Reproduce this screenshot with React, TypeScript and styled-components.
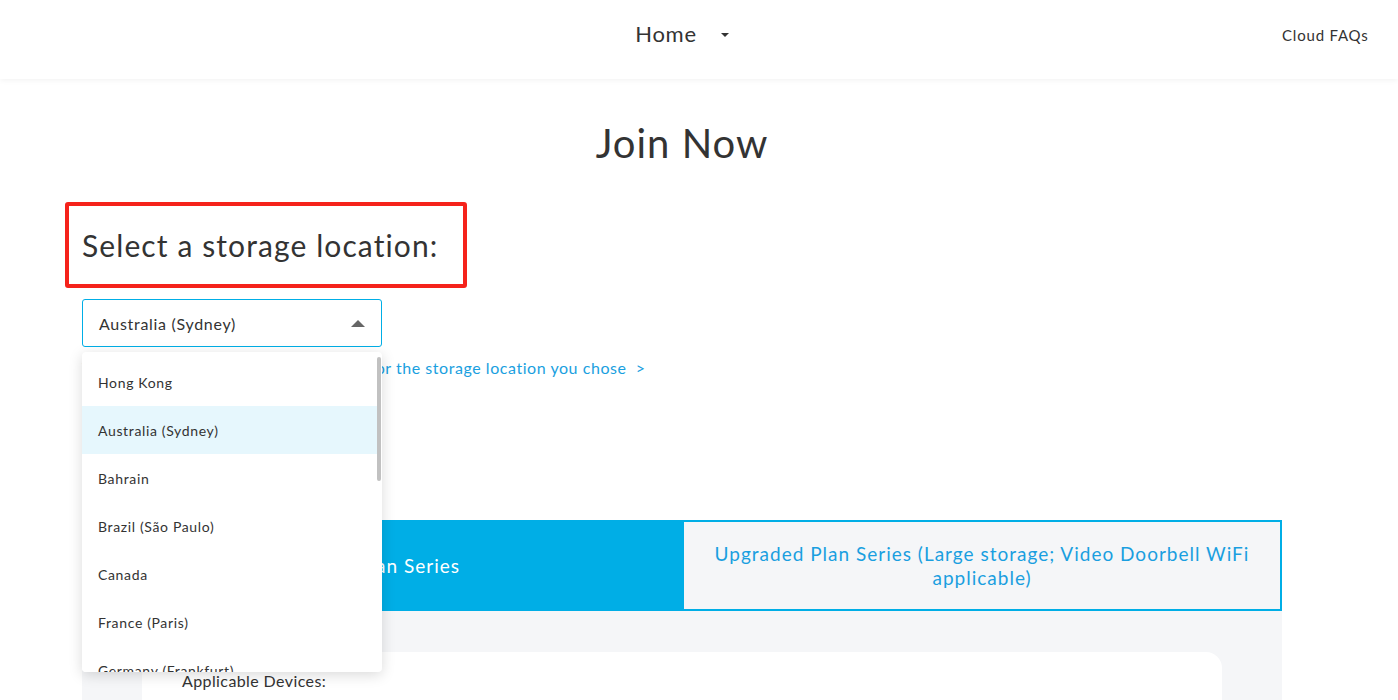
import React, { useState } from "react";
import styled, { createGlobalStyle } from "styled-components";

const GlobalStyle = createGlobalStyle`
  html, body {
    margin: 0;
    padding: 0;
    background: #fff;
    font-family: "Lato", "Noto Sans", sans-serif;
    color: #333;
  }
  * { box-sizing: border-box; }
`;

const blue = "#00aee6";

const Header = styled.header`
  height: 79px;
  background: #fff;
  box-shadow: 0 1px 6px rgba(0, 0, 0, 0.06);
  display: grid;
  grid-template-columns: 82px 1200px 1fr;
  align-items: start;
  padding: 20px 30px 0 0;
`;

const NavCenter = styled.div`
  grid-column: 2;
  justify-self: center;
  display: flex;
  align-items: center;
  gap: 24px;
  font-size: 22px;
  line-height: 28px;
  letter-spacing: 0.7px;
  color: #333;
`;

const Caret = styled.span`
  width: 0;
  height: 0;
  border-left: 4px solid transparent;
  border-right: 4px solid transparent;
  border-top: 4px solid #333;
  margin-top: 2px;
`;

const NavRight = styled.a`
  justify-self: end;
  margin-top: 5px;
  white-space: nowrap;
  font-size: 15px;
  line-height: 20px;
  letter-spacing: 0.8px;
  color: #333;
  text-decoration: none;
`;

const Main = styled.main`
  width: 1200px;
  margin-left: 82px;
`;

const Title = styled.h1`
  margin: 40px 0 0;
  text-align: center;
  font-weight: 400;
  font-size: 40px;
  line-height: 48px;
  letter-spacing: 1px;
  color: #333;
`;

const Highlight = styled.div`
  margin: 35px 0 0 -17px;
  border: 4px solid #f5221b;
  border-radius: 3px;
  padding: 0 0 0 13px;
  height: 86px;
  width: 402px;
  display: flex;
  align-items: center;
`;

const SectionTitle = styled.h2`
  margin: 0;
  font-weight: 400;
  font-size: 30px;
  letter-spacing: 1.1px;
  color: #333;
`;

const SelectWrap = styled.div`
  position: relative;
  width: 300px;
  margin-top: 11px;
`;

const SelectBox = styled.div`
  height: 48px;
  border: 1px solid ${blue};
  border-radius: 3px;
  display: flex;
  align-items: center;
  justify-content: space-between;
  padding: 0 16px;
  font-size: 16px;
  letter-spacing: 0.7px;
  color: #333;
`;

const UpArrow = styled.span`
  width: 0;
  height: 0;
  border-left: 7px solid transparent;
  border-right: 7px solid transparent;
  border-bottom: 7px solid #666;
`;

const Menu = styled.ul`
  position: absolute;
  top: 53px;
  left: 0;
  width: 300px;
  height: 320px;
  margin: 0;
  padding: 6px 0 0;
  list-style: none;
  background: #fff;
  border-radius: 4px;
  box-shadow: 0 3px 14px rgba(0, 0, 0, 0.15);
  overflow: hidden;
  z-index: 10;
`;

const Option = styled.li<{ $active?: boolean }>`
  height: 48px;
  display: flex;
  align-items: center;
  padding-left: 16px;
  font-size: 14px;
  letter-spacing: 0.65px;
  color: #333;
  background: ${(p) => (p.$active ? "#e6f7fd" : "#fff")};
  margin-right: 4px;
`;

const ScrollThumb = styled.span`
  position: absolute;
  right: 1px;
  top: 5px;
  width: 4px;
  height: 124px;
  border-radius: 2px;
  background: #c1c1c1;
`;

const PriceLink = styled.a`
  display: block;
  margin-top: 11px;
  font-size: 16px;
  line-height: 20px;
  letter-spacing: 0.55px;
  color: #1a9fe0;
  text-decoration: none;
`;

const Tabs = styled.div`
  margin-top: 142px;
  display: grid;
  grid-template-columns: 1fr 1fr;
  height: 91px;
`;

const Tab = styled.div<{ $active?: boolean }>`
  display: flex;
  align-items: center;
  justify-content: center;
  text-align: center;
  padding: 0 30px;
  font-size: 19px;
  line-height: 24px;
  letter-spacing: 1px;
  color: ${(p) => (p.$active ? "#fff" : "#1a9fe0")};
  background: ${(p) => (p.$active ? blue : "#f5f6f8")};
  border: 2px solid ${blue};
`;

const Panel = styled.div`
  background: #f5f6f8;
  padding: 41px 60px 40px;
`;

const Card = styled.div`
  background: #fff;
  border-radius: 16px;
  padding: 19px 40px;
  min-height: 200px;
`;

const CardLabel = styled.div`
  font-size: 16px;
  letter-spacing: 0.4px;
  color: #333;
`;

const regions = [
  "Hong Kong",
  "Australia (Sydney)",
  "Bahrain",
  "Brazil (São Paulo)",
  "Canada",
  "France (Paris)",
  "Germany (Frankfurt)",
  "India (Mumbai)",
];

export default function App() {
  const [selected] = useState("Australia (Sydney)");
  return (
    <>
      <GlobalStyle />
      <Header>
        <NavCenter>
          <span>Home</span>
          <Caret />
        </NavCenter>
        <NavRight href="#">Cloud FAQs</NavRight>
      </Header>
      <Main>
        <Title>Join Now</Title>
        <Highlight>
          <SectionTitle>Select a storage location:</SectionTitle>
        </Highlight>
        <SelectWrap>
          <SelectBox>
            <span>{selected}</span>
            <UpArrow />
          </SelectBox>
          <Menu>
            {regions.map((r) => (
              <Option key={r} $active={r === selected}>
                {r}
              </Option>
            ))}
            <ScrollThumb />
          </Menu>
        </SelectWrap>
        <PriceLink href="#">
          View the cloud storage plans &amp; prices for the storage location you chose &nbsp;&gt;
        </PriceLink>
        <Tabs>
          <Tab $active>Basic Plan Series</Tab>
          <Tab>Upgraded Plan Series (Large storage; Video Doorbell WiFi applicable)</Tab>
        </Tabs>
        <Panel>
          <Card>
            <CardLabel>Applicable Devices:</CardLabel>
          </Card>
        </Panel>
      </Main>
    </>
  );
}
